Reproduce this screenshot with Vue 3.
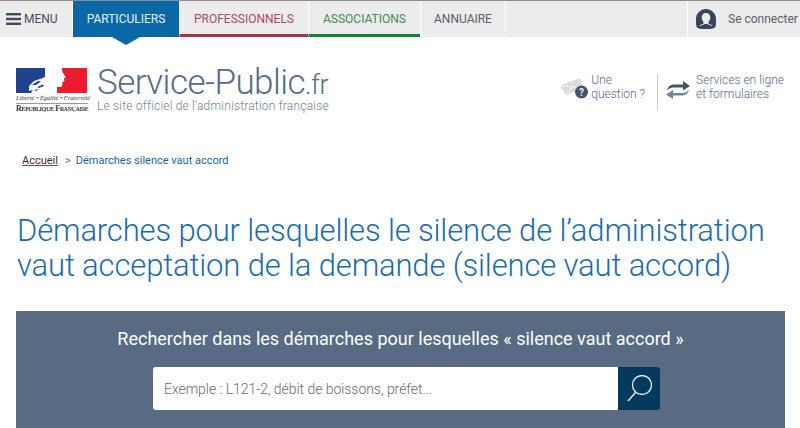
<script setup>
const tabs = [
  { label: 'PARTICULIERS', cls: 'tab-part' },
  { label: 'PROFESSIONNELS', cls: 'tab-pro' },
  { label: 'ASSOCIATIONS', cls: 'tab-asso' },
  { label: 'ANNUAIRE', cls: 'tab-annu' },
]
</script>

<template>
  <div class="page">
    <nav class="topbar">
      <a class="menu">
        <svg class="burger" width="15" height="12" viewBox="0 0 15 12">
          <rect x="0" y="0" width="15" height="2.4" fill="#444c5c" />
          <rect x="0" y="4.8" width="15" height="2.4" fill="#444c5c" />
          <rect x="0" y="9.6" width="15" height="2.4" fill="#444c5c" />
        </svg>
        MENU
      </a>
      <a v-for="tab in tabs" :key="tab.label" class="tab" :class="tab.cls">{{ tab.label }}</a>
      <div class="spacer"></div>
      <a class="login">
        <svg class="avatar" width="20" height="20" viewBox="0 0 20 20">
          <path d="M1 18.500C-.5 15.500 0 13 0 10 0 4.500 4.500 0 10 0s10 4.500 10 10c0 3 .5 5.500-1 8.500-1.500 1-4 1.500-9 1.500s-7.500-.5-9-1.500z" fill="#36455c" />
          <path d="M10 4c-2.800 0-4.300 2-4.300 4.600 0 1.900.8 3.500 1.900 4.500v1.200c-1 1.200-3 1.300-4.200 2.700.9.3 1.600-.7 3-1.100 1.300-.4 2-1 3.600-1s2.300.6 3.600 1c1.400.4 2.100 1.400 3 1.100-1.200-1.400-3.200-1.500-4.200-2.700v-1.200c1.100-1 1.900-2.600 1.900-4.500C14.300 6 12.800 4 10 4z" fill="#ececec" />
        </svg>
        <span>Se connecter</span>
      </a>
    </nav>

    <header class="brand">
      <div class="logo-block">
        <div class="logo">
          <svg class="flag" width="71" height="25" viewBox="0 0 71 25">
            <rect x="0" y="0" width="29" height="25" fill="#21438d" />
            <path d="M46 0h25v25H41v-6c2 0 4 .5 5-1l.5-4 2-1-.5-3 2-.5-3-4.500c-1-2-1-3.500-1-5z" fill="#ec1c2e" />
            <path d="M13 18l5-5 6-2 5-2v16H15l2-3-4 1z" fill="#fff" />
            <path d="M16 17l6-4 3 .5-5 3.500zM21 19l6-2.500 1 1.500-5 2zM18 22l5-1-3 2z" fill="#21438d" />
          </svg>
          <div class="devise">Liberté • Égalité • Fraternité</div>
          <div class="republique">République Française</div>
        </div>
        <div class="site-name">
          <div class="site-title">Service-Public<small>.fr</small></div>
          <div class="site-sub">Le site officiel de l'administration française</div>
        </div>
      </div>
      <div class="quick-links">
        <a class="quick quick-q">
          <svg width="29" height="28" viewBox="0 0 29 28">
            <path d="M0 7.500L20 0l3 10-17 7.500z" fill="#dcdcdc" />
            <path d="M0 7.500L14 9l9 1M6 17.500L12 9" fill="none" stroke="#f5f5f5" stroke-width="1" />
            <circle cx="21.500" cy="14" r="6.500" fill="#48536a" />
            <text x="21.500" y="17.500" class="qmark">?</text>
          </svg>
          <span>Une<br />question ?</span>
        </a>
        <a class="quick quick-s">
          <svg width="24" height="20" viewBox="0 0 24 20">
            <path d="M1 10.500C2 6 5 4.500 9 4.500h8V1l7 5-7 4.500V7.500H9C6 7.500 3 8 1 10.500z" fill="#48536a" />
            <path d="M23 9.500C22 14 19 15.500 15 15.500H7V19L0 14.500 7 10v3h8c3 0 6-.5 8-3.500z" fill="#6f85a3" />
          </svg>
          <span>Services en ligne<br />et formulaires</span>
        </a>
      </div>
    </header>

    <div class="breadcrumb">
      <a class="crumb-home">Accueil</a>
      <span class="crumb-sep">&gt;</span>
      <span class="crumb-current">Démarches silence vaut accord</span>
    </div>

    <h1 class="title">Démarches pour lesquelles le silence de l’administration<br />vaut acceptation de la demande (silence vaut accord)</h1>

    <section class="search">
      <h2 class="search-title">Rechercher dans les démarches pour lesquelles « silence vaut accord »</h2>
      <div class="search-box">
        <input class="search-input" type="text" placeholder="Exemple : L121-2, débit de boissons, préfet..." />
        <button class="search-btn">
          <svg width="26" height="28" viewBox="0 0 26 28">
            <circle cx="16" cy="10" r="9.500" fill="none" stroke="#e8f0f5" stroke-width="1.300" />
            <path d="M9.500 17.500L2 26" fill="none" stroke="#e8f0f5" stroke-width="1.400" />
          </svg>
        </button>
      </div>
    </section>
  </div>
</template>

<style>
html, body {
  margin: 0;
  background: #fff;
  overflow: hidden;
}
</style>

<style scoped>
.page {
  width: 800px;
  height: 428px;
  overflow: hidden;
  font-family: Roboto, "Liberation Sans", sans-serif;
  color: #5a6b82;
}
.topbar {
  display: flex;
  height: 36px;
  background: #ececec;
  border-top: 1px solid #8c8c8c;
  font-size: 12px;
}
.menu {
  display: flex;
  align-items: center;
  gap: 3px;
  width: 72px;
  padding-left: 6px;
  box-sizing: border-box;
  color: #444c5c;
  font-size: 12px;
}
.tab {
  display: flex;
  align-items: center;
  justify-content: center;
  box-sizing: border-box;
  height: 36px;
  border-left: 1px solid #fff;
  position: relative;
}
.tab-part {
  width: 107px;
  background: #0b68a6;
  color: #e6f0f7;
  border-left: 1px solid #fff;
}
.tab-part::after {
  content: "";
  position: absolute;
  left: 39px;
  top: 36px;
  border-left: 14px solid transparent;
  border-right: 14px solid transparent;
  border-top: 8px solid #0b68a6;
}
.tab-pro {
  width: 129px;
  color: #a94a63;
  border-bottom: 3px solid #a8324e;
  padding-top: 3px;
}
.tab-asso {
  width: 112px;
  color: #3f8a55;
  border-bottom: 3px solid #108036;
  padding-top: 3px;
}
.tab-annu {
  width: 86px;
  color: #58606c;
  border-right: 1px solid #fff;
}
.spacer {
  flex: 1;
}
.login {
  display: flex;
  align-items: center;
  width: 113px;
  box-sizing: border-box;
  padding-left: 8px;
  gap: 12px;
  border-left: 1px solid #fff;
  color: #58606c;
  font-size: 12px;
  white-space: nowrap;
}
.brand {
  display: flex;
  justify-content: space-between;
  padding: 31px 0 0 16px;
  height: 110px;
  box-sizing: border-box;
}
.logo-block {
  display: flex;
  gap: 9px;
}
.logo {
  width: 72px;
  padding-top: 0;
}
.flag {
  display: block;
}
.devise {
  font-family: "Liberation Serif", serif;
  font-style: italic;
  font-size: 6.400px;
  color: #333;
  white-space: nowrap;
  border-bottom: 1px solid #999;
  line-height: 8px;
  margin-top: 1px;
  padding-bottom: 1px;
}
.republique {
  font-family: "Liberation Serif", serif;
  font-size: 7.900px;
  font-variant: small-caps;
  font-weight: bold;
  letter-spacing: -0.35px;
  color: #333;
  white-space: nowrap;
  line-height: 8px;
  margin-top: 1px;
}
.site-title {
  font-size: 35px;
  font-weight: 300;
  line-height: 29px;
  letter-spacing: -0.55px;
  color: #5a6b85;
  white-space: nowrap;
}
.site-title small {
  font-size: 27px;
}
.site-sub {
  font-size: 12px;
  font-weight: 300;
  line-height: 14px;
  margin-top: -1px;
  color: #6f7f95;
  letter-spacing: 0.2px;
  white-space: nowrap;
}
.quick-links {
  display: flex;
  margin-right: 16px;
  padding-top: 5px;
}
.quick {
  display: flex;
  font-size: 12px;
  line-height: 14px;
  font-weight: 300;
  color: #5a6b82;
  height: 37px;
  white-space: nowrap;
}
.quick-q {
  gap: 2px;
  padding-right: 12px;
  border-right: 1px solid #cfcfcf;
  align-items: flex-start;
}
.quick-q svg {
  margin-top: 5px;
}
.quick-s {
  gap: 6px;
  padding-left: 8px;
}
.quick-s svg {
  margin-top: 7px;
}
.qmark {
  font-family: Roboto, sans-serif;
  font-size: 10px;
  font-weight: 700;
  fill: #eee;
  text-anchor: middle;
}
.breadcrumb {
  margin-top: 7px;
  padding-left: 22px;
  font-size: 11px;
  line-height: 14px;
  color: #1d5f96;
}
.crumb-home {
  color: #333;
  text-decoration: underline;
  text-decoration-color: #a8324e;
}
.crumb-sep {
  margin: 0 5px 0 7px;
  color: #666;
}
.title {
  margin: 45px 0 0 17px;
  width: 770px;
  font-size: 31px;
  font-weight: 300;
  line-height: 35px;
  letter-spacing: -0.15px;
  white-space: nowrap;
  color: #1d6bab;
}
.search {
  margin: 28px 15px 0 16px;
  padding: 17px 0 0;
  height: 120px;
  box-sizing: border-box;
  background: #586b82;
  text-align: center;
}
.search-title {
  margin: 0;
  font-size: 18px;
  font-weight: 400;
  line-height: 22px;
  color: #fff;
}
.search-box {
  display: flex;
  width: 507px;
  height: 43px;
  margin: 17px 0 0 137px;
}
.search-input {
  flex: 1;
  min-width: 0;
  border: 0;
  outline: 0;
  padding: 0 11px;
  border-radius: 3px 0 0 3px;
  font-family: Roboto, sans-serif;
  font-size: 14px;
  font-weight: 300;
  letter-spacing: -0.05px;
  background: #fff;
}
.search-input::placeholder {
  color: #6a6a6a;
  opacity: 1;
}
.search-btn {
  width: 42px;
  border: 0;
  padding: 0;
  background: #063a5c;
  border-radius: 0 3px 3px 0;
  display: flex;
  align-items: center;
  justify-content: center;
}
</style>
